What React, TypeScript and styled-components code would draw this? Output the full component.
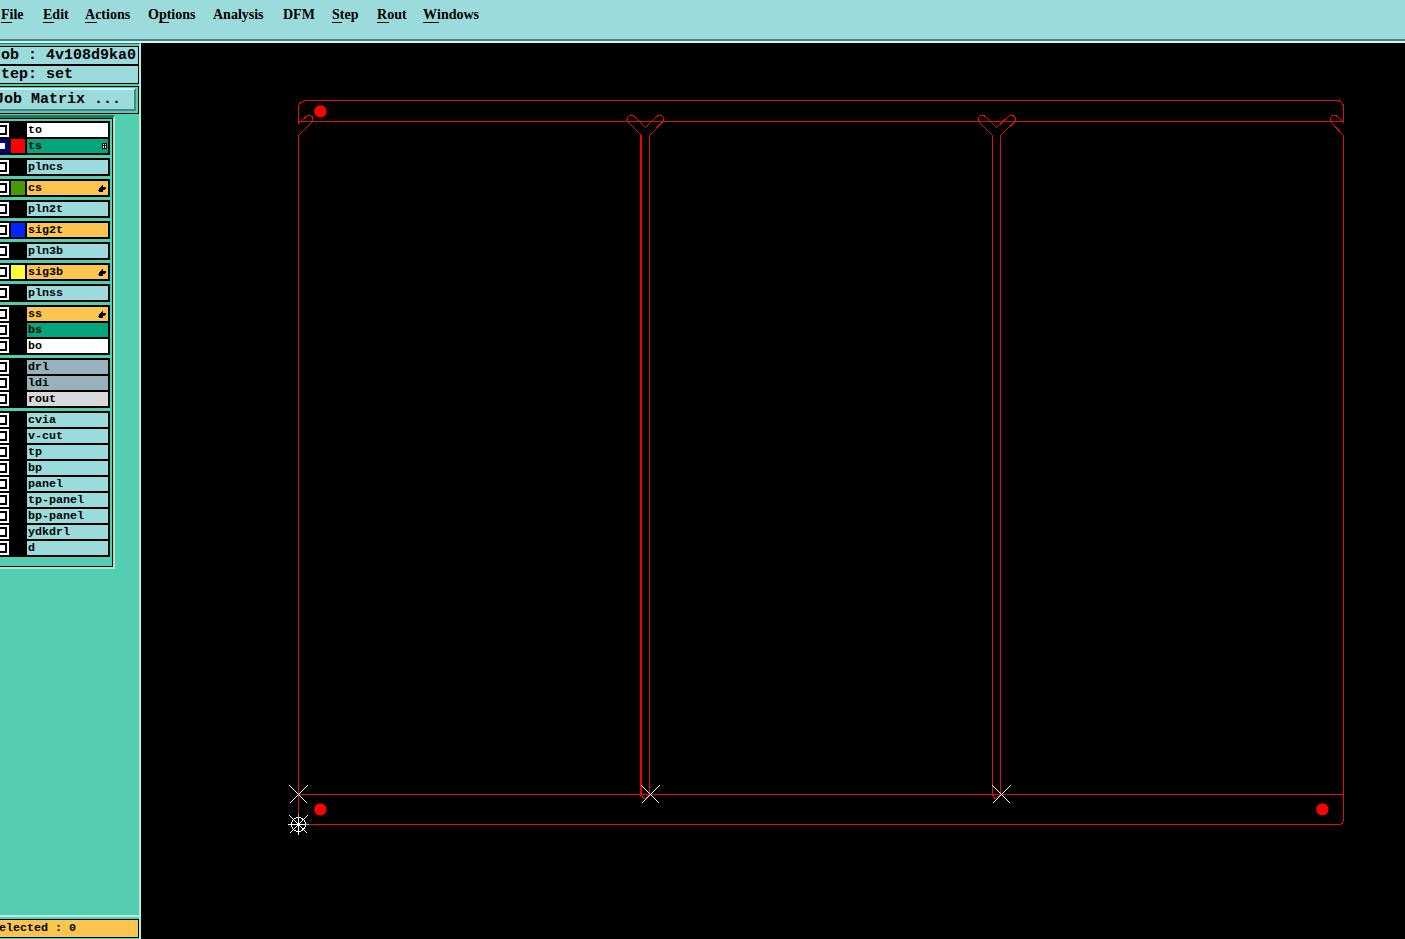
import React from "react";
import styled, { createGlobalStyle } from "styled-components";

const Global = createGlobalStyle`
  * { box-sizing: border-box; }
  html, body { margin: 0; padding: 0; background: #000; overflow: hidden; }
`;

const Screen = styled.div`
  width: 1405px;
  height: 939px;
  display: flex;
  flex-direction: column;
  background: #000;
  color: #000;
  overflow: hidden;
`;

const MenuBar = styled.nav`
  height: 43px;
  flex: none;
  display: flex;
  align-items: flex-start;
  padding: 6px 0 0 1px;
  background: #9bdbdb;
  border-bottom: 2px solid #d9f5f3;
  box-shadow: inset 0 -2px 0 #4f8080;
  font: bold 14px/17px "Liberation Serif", serif;
`;

const MenuItem = styled.span<{ $w: number }>`
  width: ${(p) => p.$w}px;
  flex: none;
  white-space: nowrap;
`;

const Mnemonic = styled.span`
  display: inline-block;
  height: 17px;
  margin-right: -2px;
  padding-right: 2px;
  border-bottom: 1px solid #000;
`;

const Body = styled.div`
  flex: 1;
  min-height: 0;
  display: flex;
`;

const Sidebar = styled.aside`
  width: 141px;
  flex: none;
  display: flex;
  flex-direction: column;
  background: #54ceb0;
  border-right: 2px solid #b4efdc;
  border-top: 1px solid #247c68;
  overflow: hidden;
`;

const JobInfo = styled.div`
  height: 38px;
  margin-top: 2px;
  flex: none;
  display: flex;
  flex-direction: column;
  gap: 2px;
  padding: 1px 1px 1px 0;
  background: #000;
`;

const InfoLine = styled.div<{ $shift: number }>`
  height: 17px;
  background: #9bdbdb;
  font: bold 15px/18px "Liberation Mono", monospace;
  white-space: pre;
  text-indent: ${(p) => p.$shift}px;
  overflow: hidden;
`;

const MatrixFrame = styled.div`
  height: 28px;
  margin-top: 2px;
  flex: none;
  border: 1px solid #000;
  border-left: 0;
  padding: 1px 2px 2px 0;
`;

const MatrixButton = styled.button`
  display: block;
  width: 100%;
  height: 23px;
  margin: 0;
  padding: 0;
  border: 0 solid;
  border-width: 2px 2px 2px 0;
  border-color: #c4fafa #4f8484 #4f8484 #c4fafa;
  background: #9bdbdb;
  color: #000;
  text-align: left;
  text-indent: -5px;
  white-space: pre;
  font: bold 15px/20px "Liberation Mono", monospace;
`;

const LayerArea = styled.div`
  flex: 1;
  min-height: 0;
  border-bottom: 2px solid #b4efdc;
  margin-top: 1px;
`;

const LayerPanel = styled.section`
  width: 115px;
  height: 454px;
  border-top: 3px solid #267662;
  border-right: 2px solid #a5ead6;
  border-bottom: 2px solid #a5ead6;
`;

const LayerList = styled.div`
  height: 449px;
  display: flex;
  flex-direction: column;
  gap: 3px;
  padding-top: 2px;
  border: 1px solid #000;
  border-left: 0;
`;

const LayerGroup = styled.div`
  width: 110px;
  flex: none;
  display: flex;
  flex-direction: column;
  gap: 2px;
  padding: 2px 2px 2px 0;
  background: #000;
`;

const LayerRow = styled.div`
  height: 14px;
  display: flex;
`;

const CheckCell = styled.div<{ $active: boolean }>`
  width: 9px;
  flex: none;
  padding: 2px 2px 2px 0;
  background: ${(p) => (p.$active ? "#00007e" : "#fff")};
`;

const CheckBox = styled.div<{ $active: boolean }>`
  height: 10px;
  border: 2px solid ${(p) => (p.$active ? "#00007e" : "#000")};
  border-left: 0;
  background: #fff;
`;

const Swatch = styled.div<{ $color: string }>`
  width: 14px;
  margin: 0 2px;
  flex: none;
  background: ${(p) => p.$color};
`;

const LayerName = styled.div<{ $color: string }>`
  flex: 1;
  display: flex;
  justify-content: space-between;
  align-items: center;
  padding: 0 1px;
  background: ${(p) => p.$color};
  font: bold 11.67px/14px "Liberation Mono", monospace;
  white-space: pre;
`;

const Selected = styled.footer`
  height: 19px;
  flex: none;
  margin: 2px 0 1px;
  border: 1px solid #000;
  border-left: 0;
  background: #fdc54f;
  font: bold 11.67px/17px "Liberation Mono", monospace;
  white-space: pre;
  text-indent: -1px;
`;

const Board = styled.svg`
  display: block;
  width: 1264px;
  height: 896px;
  flex: none;
  background: #000;
`;

const AQUA = "#9bdbdb";
const ORANGE = "#fdc54f";
const GREEN = "#05a57c";
const SLATE = "#97b2bb";

type Mark = "hand" | "grid";
type Layer = { name: string; bg: string; swatch?: string; mark?: Mark; active?: boolean };

const plain = (name: string): Layer => ({ name, bg: AQUA });

const groups: Layer[][] = [
  [
    { name: "to", bg: "#fff" },
    { name: "ts", bg: GREEN, swatch: "#f00", mark: "grid", active: true },
  ],
  [plain("plncs")],
  [{ name: "cs", bg: ORANGE, swatch: "#459c00", mark: "hand" }],
  [plain("pln2t")],
  [{ name: "sig2t", bg: ORANGE, swatch: "#0224ff" }],
  [plain("pln3b")],
  [{ name: "sig3b", bg: ORANGE, swatch: "#ffff38", mark: "hand" }],
  [plain("plnss")],
  [
    { name: "ss", bg: ORANGE, mark: "hand" },
    { name: "bs", bg: GREEN },
    { name: "bo", bg: "#fff" },
  ],
  [
    { name: "drl", bg: SLATE },
    { name: "ldi", bg: SLATE },
    { name: "rout", bg: "#d9d9d9" },
  ],
  ["cvia", "v-cut", "tp", "bp", "panel", "tp-panel", "bp-panel", "ydkdrl", "d"].map(plain),
];

const menu: [string, string, string, number][] = [
  ["", "F", "ile", 42],
  ["", "E", "dit", 42],
  ["", "A", "ctions", 63],
  ["O", "p", "tions", 65],
  ["Analysis", "", "", 70],
  ["DFM", "", "", 49],
  ["", "S", "tep", 45],
  ["", "R", "out", 46],
  ["", "W", "indows", 60],
];

const LayerMark = ({ kind }: { kind: Mark }) =>
  kind === "hand" ? (
    <svg width="9" height="9" viewBox="0 0 9 9" shapeRendering="crispEdges">
      <path d="M4 1h1v1h-1zM3 2h2v1h-2zM2 3h6v2h-6zM1 4h6v2h-6zM0 6h5v1h-5zM1 7h4v1h-4z" />
    </svg>
  ) : (
    <svg width="6" height="6" viewBox="0 0 6 6" shapeRendering="crispEdges">
      <path d="M1 0h5v6H1z" />
      <path d="M2 1h1v1H2zM4 1h1v1H4zM2 3h1v2H2zM4 3h1v2H4z" fill="#fff" />
    </svg>
  );

const Cross = ({ x, y, r = 9 }: { x: number; y: number; r?: number }) => (
  <path
    d={`M${x - r} ${y - r}L${x + r} ${y + r}M${x + r} ${y - r}L${x - r} ${y + r}`}
    stroke="#fff"
  />
);

export default function App() {
  return (
    <>
      <Global />
      <Screen>
        <MenuBar>
          {menu.map(([before, key, after, w]) => (
            <MenuItem key={before + key + after} $w={w}>
              {before}
              {key && <Mnemonic>{key}</Mnemonic>}
              {after}
            </MenuItem>
          ))}
        </MenuBar>
        <Body>
          <Sidebar>
            <JobInfo>
              <InfoLine $shift={-8}>Job : 4v108d9ka0</InfoLine>
              <InfoLine $shift={1}>tep: set</InfoLine>
            </JobInfo>
            <MatrixFrame>
              <MatrixButton>Job Matrix ...</MatrixButton>
            </MatrixFrame>
            <LayerArea>
              <LayerPanel>
                <LayerList>
                  {groups.map((rows) => (
                    <LayerGroup key={rows[0].name}>
                      {rows.map((l) => (
                        <LayerRow key={l.name}>
                          <CheckCell $active={!!l.active}>
                            <CheckBox $active={!!l.active} />
                          </CheckCell>
                          <Swatch $color={l.swatch ?? "#000"} />
                          <LayerName $color={l.bg}>
                            {l.name}
                            {l.mark && <LayerMark kind={l.mark} />}
                          </LayerName>
                        </LayerRow>
                      ))}
                    </LayerGroup>
                  ))}
                </LayerList>
              </LayerPanel>
            </LayerArea>
            <Selected>elected : 0</Selected>
          </Sidebar>
          <Board viewBox="141 43 1264 896" fill="none" strokeWidth="1">
            <g stroke="#dc1010" shapeRendering="crispEdges">
              <path d="M298.5 123.5V108.5Q298.5 100.5 307.5 100.5H1336.5Q1343.5 100.5 1343.5 107.5V122.5" />
              <path d="M299 121.5H1343M298 794.5H1343" />
              <path d="M298.5 123.5L306 116.5Q309 114 312 116.5Q314 119 312 122L298.5 135.5V824.5H1338.5Q1343.5 824.5 1343.5 819.5V135.5L1331.5 122.5Q1329 118 1332.5 115.5Q1335.5 114.5 1338 117L1343.5 122.5" />
              <path d="M641.5 795V135.5L628.5 122.5Q626 118 629.5 115.5Q632.5 114.5 635 117L645.5 127.5L656 117Q659.5 114 662.5 116.5Q664.5 119 662.5 122L649.5 135.5V794.5L645.5 799Q643.5 799 641.5 795" />
              <path d="M992.5 794.5V135.5L979.5 122.5Q977 118 980.5 115.5Q983.5 114.5 986 117L996.5 127.5L1008 117Q1011 114 1014.5 116.5Q1016.5 119 1014.5 122L1000.5 135.5V794.5L996.5 799Q994.5 799 992.5 794.5" />
            </g>
            <path d="M641 135V796" stroke="#f00000" strokeWidth="2" />
            <g fill="#f00">
              <circle cx="320.4" cy="111.4" r="6.2" />
              <circle cx="320.4" cy="809.4" r="6.2" />
              <circle cx="1322.4" cy="809.4" r="6.2" />
            </g>
            <g shapeRendering="crispEdges">
              <Cross x={298.5} y={794.5} />
              <Cross x={650.5} y={794.5} />
              <Cross x={1001.5} y={794.5} />
              <Cross x={298.5} y={824.5} />
              <circle cx="298.5" cy="824.5" r="7" stroke="#fff" />
              <path d="M298.5 817V835M288 824.5H306" stroke="#fff" />
              <path d="M298.5 814V818M305 824.5H309" stroke="#42d8d8" />
            </g>
          </Board>
        </Body>
      </Screen>
    </>
  );
}
